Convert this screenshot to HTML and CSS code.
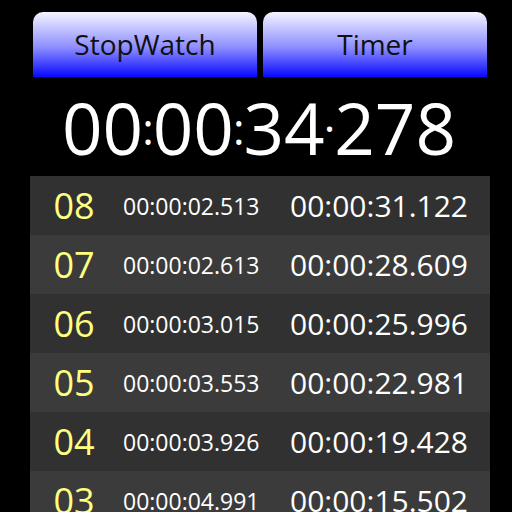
FILE: index.html
```html
<!DOCTYPE html>
<html lang="en">
  <head>
    <meta charset="UTF-8">
    <title>stopwatch</title>
    <link rel="stylesheet" href="styles.css">
  </head>
  <body>
    <div class="tabs">
      <button class="tab">StopWatch</button>
      <button class="tab">Timer</button>
    </div>

    <div class="clock">00<span class="sep">:</span>00<span class="sep">:</span>34<span class="sep dot">·</span>278</div>

    <div class="laps">
      <div class="lap">
        <span class="no">08</span>
        <span class="split">00:00:02.513</span>
        <span class="total">00:00:31.122</span>
      </div>
      <div class="lap">
        <span class="no">07</span>
        <span class="split">00:00:02.613</span>
        <span class="total">00:00:28.609</span>
      </div>
      <div class="lap">
        <span class="no">06</span>
        <span class="split">00:00:03.015</span>
        <span class="total">00:00:25.996</span>
      </div>
      <div class="lap">
        <span class="no">05</span>
        <span class="split">00:00:03.553</span>
        <span class="total">00:00:22.981</span>
      </div>
      <div class="lap">
        <span class="no">04</span>
        <span class="split">00:00:03.926</span>
        <span class="total">00:00:19.428</span>
      </div>
      <div class="lap">
        <span class="no">03</span>
        <span class="split">00:00:04.991</span>
        <span class="total">00:00:15.502</span>
      </div>
    </div>
  </body>
</html>
```

FILE: styles.css
```css
* {
  margin: 0;
  padding: 0;
  box-sizing: border-box;
}

html,
body {
  height: 100%;
  overflow: hidden;
}

body {
  background: #000000;
  font-family: "Open Sans", "Noto Sans", sans-serif;
  color: #ffffff;
}

.tabs {
  display: flex;
  gap: 6px;
  padding: 12px 0 0 33px;
}

.tabs > .tab {
  width: 224px;
  height: 65px;
  border: none;
  border-radius: 10px 10px 0 0;
  background: linear-gradient(#f4f4ff, #8c8cff 55%, #0808ff);
  font-family: "Open Sans", "Noto Sans", sans-serif;
  font-size: 28px;
  color: #101010;
  padding-bottom: 2px;
}

.clock {
  height: 99px;
  padding-top: 15px;
  font-size: 71px;
  line-height: 71px;
  text-align: center;
  padding-left: 6px;
  white-space: nowrap;
}

.clock > .sep {
  display: inline-block;
  font-size: 44px;
  margin: 0 -1px;
  vertical-align: 10px;
  line-height: 44px;
}

.laps {
  margin: 0 22px 0 30px;
}

.lap {
  display: grid;
  grid-template-columns: 88px 172px 1fr;
  align-items: center;
  height: 59px;
  background: #313131;
}

.lap:nth-child(even) {
  background: #3b3b3b;
}

.lap > .no {
  text-align: center;
  font-size: 36px;
  color: #ffff80;
}

.lap > .split {
  padding-left: 5px;
  font-size: 23px;
}

.lap > .total {
  font-size: 30px;
}
```
